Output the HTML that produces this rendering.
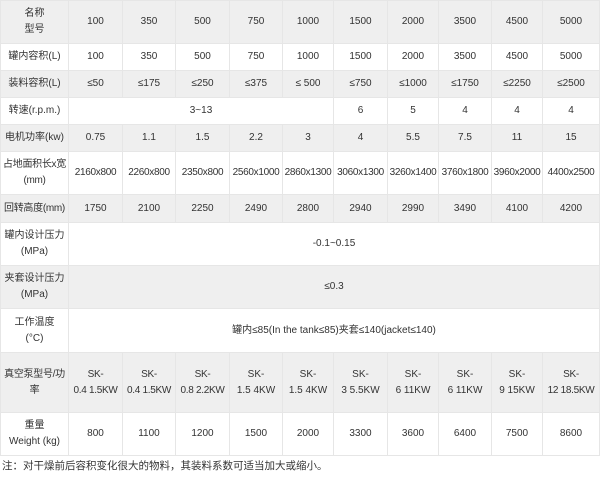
<!DOCTYPE html>
<html><head><meta charset="utf-8"><style>
body{margin:0;background:#fff;width:600px;height:500px;overflow:hidden;font-family:"Liberation Sans","Noto Sans CJK SC",sans-serif;color:#333;}
table{border-collapse:collapse;table-layout:fixed;width:599px;position:absolute;left:0;top:0;}
td{border:1px solid #e6e6e6;text-align:center;vertical-align:middle;font-size:10px;line-height:16px;padding:0;white-space:nowrap;overflow:hidden;}
td.s{letter-spacing:-0.3px;}
tr.g td{background:#efefef;}
.note{position:absolute;left:2px;top:458px;font-size:10.5px;color:#333;}
</style></head><body>
<table>
<colgroup><col style="width:68px"><col style="width:54px"><col style="width:53px"><col style="width:54px"><col style="width:53px"><col style="width:51px"><col style="width:54px"><col style="width:51px"><col style="width:53px"><col style="width:51px"><col style="width:57px"></colgroup>
<tr class="g" style="height:43px"><td>名称<br>型号</td><td>100</td><td>350</td><td>500</td><td>750</td><td>1000</td><td>1500</td><td>2000</td><td>3500</td><td>4500</td><td>5000</td></tr>
<tr style="height:27px"><td>罐内容积(L)</td><td>100</td><td>350</td><td>500</td><td>750</td><td>1000</td><td>1500</td><td>2000</td><td>3500</td><td>4500</td><td>5000</td></tr>
<tr class="g" style="height:27px"><td>装料容积(L)</td><td>≤50</td><td>≤175</td><td>≤250</td><td>≤375</td><td>≤ 500</td><td>≤750</td><td>≤1000</td><td>≤1750</td><td>≤2250</td><td>≤2500</td></tr>
<tr style="height:27px"><td>转速(r.p.m.)</td><td colspan="5">3~13</td><td>6</td><td>5</td><td>4</td><td>4</td><td>4</td></tr>
<tr class="g" style="height:27px"><td>电机功率(kw)</td><td>0.75</td><td>1.1</td><td>1.5</td><td>2.2</td><td>3</td><td>4</td><td>5.5</td><td>7.5</td><td>11</td><td>15</td></tr>
<tr style="height:43px"><td class="s">占地面积长x宽<br>(mm)</td><td class="s">2160x800</td><td class="s">2260x800</td><td class="s">2350x800</td><td class="s">2560x1000</td><td class="s">2860x1300</td><td class="s">3060x1300</td><td class="s">3260x1400</td><td class="s">3760x1800</td><td class="s">3960x2000</td><td class="s">4400x2500</td></tr>
<tr class="g" style="height:28px"><td class="s">回转高度(mm)</td><td>1750</td><td>2100</td><td>2250</td><td>2490</td><td>2800</td><td>2940</td><td>2990</td><td>3490</td><td>4100</td><td>4200</td></tr>
<tr style="height:43px"><td>罐内设计压力<br>(MPa)</td><td colspan="10">-0.1~0.15</td></tr>
<tr class="g" style="height:43px"><td>夹套设计压力<br>(MPa)</td><td colspan="10">≤0.3</td></tr>
<tr style="height:44px"><td>工作温度<br>(°C)</td><td colspan="10">罐内≤85(In the tank≤85)夹套≤140(jacket≤140)</td></tr>
<tr class="g" style="height:60px"><td class="s">真空泵型号/功<br>率</td><td class="s">SK-<br>0.4 1.5KW</td><td class="s">SK-<br>0.4 1.5KW</td><td class="s">SK-<br>0.8 2.2KW</td><td>SK-<br>1.5 4KW</td><td>SK-<br>1.5 4KW</td><td>SK-<br>3 5.5KW</td><td>SK-<br>6 11KW</td><td>SK-<br>6 11KW</td><td>SK-<br>9 15KW</td><td class="s">SK-<br>12 18.5KW</td></tr>
<tr style="height:43px"><td>重量<br>Weight (kg)</td><td>800</td><td>1100</td><td>1200</td><td>1500</td><td>2000</td><td>3300</td><td>3600</td><td>6400</td><td>7500</td><td>8600</td></tr>
</table>
<div class="note">注：对干燥前后容积变化很大的物料，其装料系数可适当加大或缩小。</div>
</body></html>
